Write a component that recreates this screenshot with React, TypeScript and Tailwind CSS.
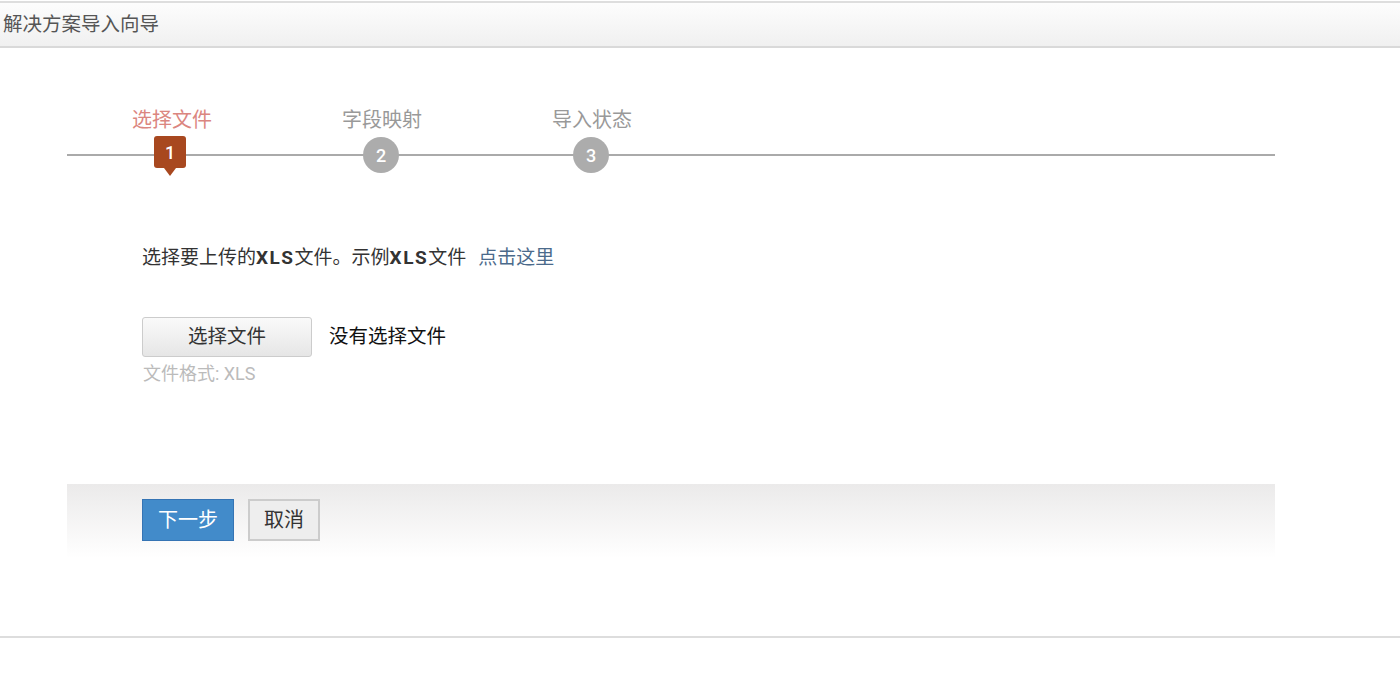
const steps = [
  { n: 1, label: "选择文件", active: true },
  { n: 2, label: "字段映射", active: false },
  { n: 3, label: "导入状态", active: false },
];

const font = { fontFamily: "Roboto, 'Noto Sans CJK SC', sans-serif" };

function StepMarker({ n, active }: { n: number; active: boolean }) {
  if (active) {
    return (
      <div className="relative mt-[4px] w-[32px] h-[32px] rounded-[3px] bg-[#a8481f] flex items-center justify-center text-white text-[18px] font-medium">
        {n}
        <span className="absolute left-1/2 -translate-x-1/2 top-full w-0 h-0 border-l-[6px] border-r-[6px] border-t-[8px] border-l-transparent border-r-transparent border-t-[#a8481f]" />
      </div>
    );
  }
  return (
    <div className="mt-[5px] w-[36px] h-[36px] rounded-full bg-[#acacac] flex items-center justify-center text-white text-[18px] font-medium">
      {n}
    </div>
  );
}

export default function App() {
  return (
    <div className="w-[1400px] h-[683px] bg-white overflow-hidden" style={font}>
      {/* header */}
      <div className="mt-px border-t-2 border-b-2 border-t-[#dedede] border-b-[#d9d9d9] h-[47px] bg-gradient-to-b from-[#fdfdfd] to-[#f0f0f0] flex items-center pl-[3px]">
        <span className="text-[19.5px] text-[#555] leading-none">解决方案导入向导</span>
      </div>

      {/* steps */}
      <div className="pt-[60px]">
        <div className="relative w-[1208px] ml-[67px] h-[80px]">
          <div className="absolute left-0 right-0 top-[46px] h-[2px] bg-[#aaaaaa]" />
          <div className="relative flex">
            {steps.map((s) => (
              <div key={s.n} className="w-[210px] flex flex-col items-center">
                <div
                  className={`text-[20px] leading-6 ${s.active ? "text-[#db8680]" : "text-[#999999]"}`}
                >
                  {s.label}
                </div>
                <div className={s.active ? "-ml-[4px]" : "-ml-[2px]"}>
                  <StepMarker n={s.n} active={s.active} />
                </div>
              </div>
            ))}
          </div>
        </div>
      </div>

      {/* body */}
      <div className="pl-[142px]">
        <p className="mt-[56px] text-[19px] leading-[28px] text-[#333]">
          选择要上传的<span className="font-bold tracking-[1.5px]">XLS</span>文件。示例<span className="font-bold tracking-[1.5px]">XLS</span>文件
          <a className="ml-[12px] text-[#4b6a8b]">点击这里</a>
        </p>

        <div className="mt-[45px] flex items-center gap-[17px]">
          <button className="w-[170px] h-[40px] rounded-[3px] border border-[#cccccc] bg-gradient-to-b from-[#fafafa] to-[#e6e6e6] text-[19.5px] text-[#333]">
            选择文件
          </button>
          <span className="text-[19.5px] text-[#111]">没有选择文件</span>
        </div>
        <div className="mt-[7px] text-[18px] leading-5 text-[#bbbbbb] pl-px">文件格式: XLS</div>
      </div>

      {/* footer actions */}
      <div className="mt-[100px] ml-[67px] w-[1208px] h-[74px] bg-gradient-to-b from-[#ebeaea] to-[#ffffff] pt-[15px] pl-[75px] flex items-start gap-[14px]">
        <button className="w-[92px] h-[42px] bg-[#428bca] border border-[#3574b4] text-white text-[20px]">
          下一步
        </button>
        <button className="w-[72px] h-[42px] bg-[#eeeeee] border-2 border-[#cccccc] text-[#333] text-[20px]">
          取消
        </button>
      </div>

      <div className="mt-[78px] border-t-2 border-[#dddddd]" />
    </div>
  );
}
